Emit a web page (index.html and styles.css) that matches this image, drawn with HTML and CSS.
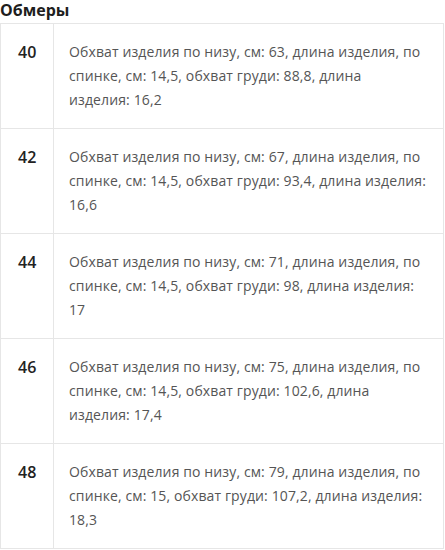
FILE: index.html
```html
<!DOCTYPE html>
<html lang="ru">
<head>
<meta charset="utf-8">
<link rel="stylesheet" href="styles.css">
</head>
<body>
<h3 class="title">Обмеры</h3>
<table class="sizes">
  <tr>
    <td class="size">40</td>
    <td class="desc">Обхват изделия по низу, см: 63, длина изделия, по спинке, см: 14,5, обхват груди: 88,8, длина изделия:&nbsp;16,2</td>
  </tr>
  <tr>
    <td class="size">42</td>
    <td class="desc">Обхват изделия по низу, см: 67, длина изделия, по спинке, см: 14,5, обхват груди: 93,4, длина изделия: 16,6</td>
  </tr>
  <tr>
    <td class="size">44</td>
    <td class="desc">Обхват изделия по низу, см: 71, длина изделия, по спинке, см: 14,5, обхват груди: 98, длина изделия: 17</td>
  </tr>
  <tr>
    <td class="size">46</td>
    <td class="desc">Обхват изделия по низу, см: 75, длина изделия, по спинке, см: 14,5, обхват груди: 102,6, длина изделия:&nbsp;17,4</td>
  </tr>
  <tr>
    <td class="size">48</td>
    <td class="desc">Обхват изделия по низу, см: 79, длина изделия, по спинке, см: 15, обхват груди: 107,2, длина изделия: 18,3</td>
  </tr>
</table>
</body>
</html>
```

FILE: styles.css
```css
html, body {
  margin: 0;
  padding: 0;
  background: #fff;
}
body {
  font-family: "Open Sans", "Liberation Sans", sans-serif;
}
.title {
  margin: 0;
  height: 23px;
  font-size: 16px;
  line-height: 20px;
  font-weight: 700;
  color: #1e1e1e;
}
.sizes {
  border-collapse: collapse;
  width: 444px;
}
.sizes td {
  border: 1px solid #e6e6e6;
  vertical-align: top;
}
.size {
  width: 19px;
  padding: 17px 16px 16px 17px;
  font-size: 16px;
  line-height: 22px;
  font-weight: 600;
  color: #222;
}
.desc {
  padding: 16px 12px 16px 15px;
  font-size: 14px;
  letter-spacing: 0.12px;
  line-height: 24px;
  color: #555;
  height: 72px;
}
```
